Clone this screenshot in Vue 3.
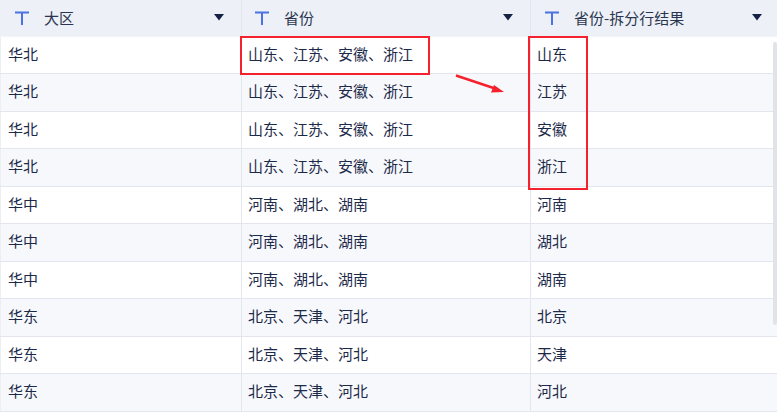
<script setup>
const columns = [
  { key: 'a', title: '大区' },
  { key: 'b', title: '省份' },
  { key: 'c', title: '省份-拆分行结果' }
]
const rows = [
  ['华北', '山东、江苏、安徽、浙江', '山东'],
  ['华北', '山东、江苏、安徽、浙江', '江苏'],
  ['华北', '山东、江苏、安徽、浙江', '安徽'],
  ['华北', '山东、江苏、安徽、浙江', '浙江'],
  ['华中', '河南、湖北、湖南', '河南'],
  ['华中', '河南、湖北、湖南', '湖北'],
  ['华中', '河南、湖北、湖南', '湖南'],
  ['华东', '北京、天津、河北', '北京'],
  ['华东', '北京、天津、河北', '天津'],
  ['华东', '北京、天津、河北', '河北']
]
</script>

<template>
  <div class="page">
    <div class="head">
      <div v-for="c in columns" :key="c.key" class="hcell" :class="'col-' + c.key">
        <svg class="t-icon" width="14" height="14" viewBox="0 0 14 14">
          <path d="M0 1.5H14M7 1.5V14" fill="none" stroke="#4a72e2" stroke-width="2" />
        </svg>
        <span class="htext">{{ c.title }}</span>
        <svg class="caret" width="10" height="7" viewBox="0 0 10 7">
          <path d="M0 0H10L5 6.5Z" fill="#142244" />
        </svg>
      </div>
    </div>
    <div v-for="(r, i) in rows" :key="i" class="row" :class="{ alt: i % 2 === 1 }">
      <div class="cell col-a">{{ r[0] }}</div>
      <div class="cell col-b">{{ r[1] }}</div>
      <div class="cell col-c">{{ r[2] }}</div>
    </div>
    <div class="box box-1"></div>
    <div class="box box-2"></div>
    <svg class="arrow" width="60" height="30" viewBox="0 0 60 30">
      <path d="M1 1.5L40 14.5" stroke="#f5222d" stroke-width="2.4" fill="none" />
      <path d="M49 18L36 18.5L39 11Z" fill="#f5222d" />
    </svg>
    <div class="scrollbar"></div>
  </div>
</template>

<style>
html, body { margin: 0; background: #fff; overflow: hidden; }
</style>

<style scoped>
.page {
  position: relative;
  width: 777px;
  height: 412px;
  overflow: hidden;
  background: #fff;
  font-family: "Noto Sans CJK SC", "Liberation Sans", sans-serif;
  font-size: 15px;
  color: #1c2a4a;
}
.head {
  display: flex;
  height: 35.5px;
  background: #edf0f6;
  border-bottom: 1px solid #f3f4f8;
  box-sizing: content-box;
}
.hcell {
  display: flex;
  align-items: center;
  box-sizing: border-box;
  border-right: 1px solid #e3e6ee;
}
.col-a { width: 242px; flex: none; }
.col-b { width: 289px; flex: none; }
.col-c { flex: 1; border-right: none; }
.hcell.col-a { padding: 0 17px 0 15px; }
.hcell.col-b { padding: 0 17px 0 13px; }
.hcell.col-c { padding: 0 15px 0 14px; }
.t-icon { flex: none; }
.htext {
  flex: 1;
  margin-left: 15px;
  line-height: 20px;
  color: #2a3650;
}
.caret { flex: none; }
.row {
  display: flex;
  height: 37.5px;
  box-sizing: border-box;
  border-bottom: 1px solid #e3e6ee;
  background: #fff;
}
.row.alt { background: #f7f8fc; }
.cell {
  display: flex;
  align-items: center;
  box-sizing: border-box;
  padding: 0 6px 3px;
  border-right: 1px solid #e3e6ee;
  white-space: nowrap;
}
.cell.col-a { border-left: 1px solid #eceef3; padding-left: 7px; }
.cell.col-c { border-right: none; }
.box {
  position: absolute;
  box-sizing: border-box;
  border: 2px solid #f5222d;
}
.box-1 { left: 240px; top: 36px; width: 190px; height: 39px; }
.box-2 { left: 528px; top: 36px; width: 60px; height: 154px; }
.arrow { position: absolute; left: 455px; top: 74px; }
.scrollbar {
  position: absolute;
  left: 773px;
  top: 42px;
  width: 4px;
  height: 283px;
  border-radius: 3px;
  background: #e2e3e8;
}
</style>
